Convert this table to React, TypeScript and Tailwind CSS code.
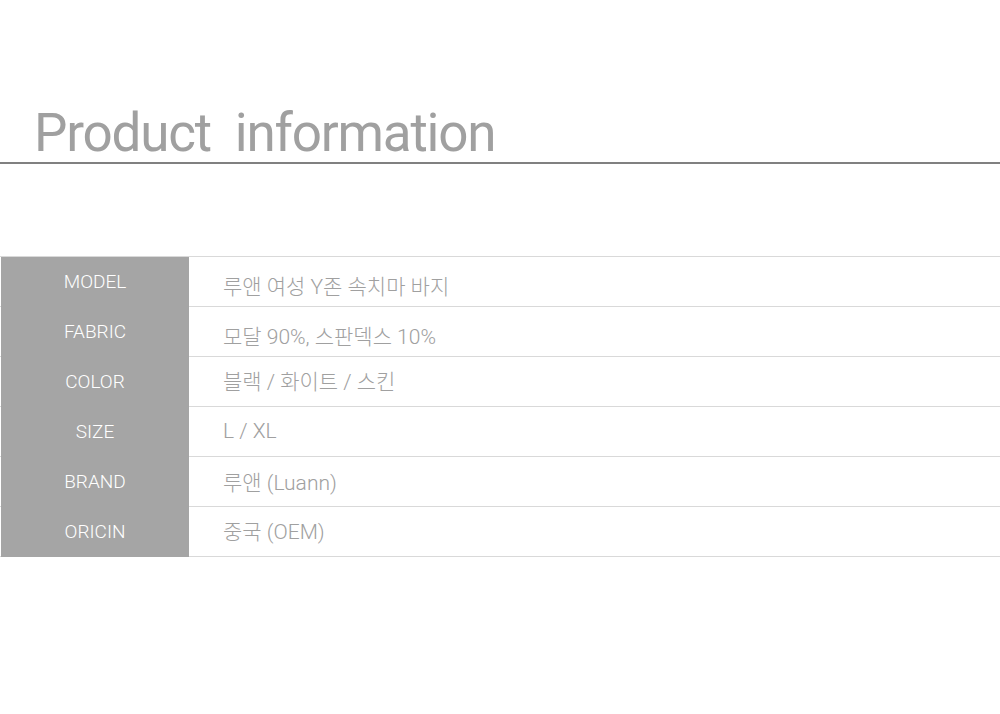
const rows = [
  { label: "MODEL", value: "루앤 여성 Y존 속치마 바지", shift: "pt-[12px]" },
  { label: "FABRIC", value: "모달 90%, 스판덱스 10%", shift: "pt-[12px]" },
  { label: "COLOR", value: "블랙 / 화이트 / 스킨", shift: "pt-[2px]" },
  { label: "SIZE", value: "L / XL", shift: "" },
  { label: "BRAND", value: "루앤 (Luann)", shift: "pt-[5px]" },
  { label: "ORICIN", value: "중국 (OEM)", shift: "pt-[3px]" },
];

export default function App() {
  return (
    <div className="w-[1000px] h-[714px] bg-white font-['Roboto','Noto_Sans_CJK_KR',sans-serif]">
      <div className="pt-[107px] pl-[34px] h-[162px]">
        <h1 className="text-[53px] leading-none text-[#a0a0a0] whitespace-pre tracking-[-1.2px]">
          Product  information
        </h1>
      </div>
      <div className="h-[2px] bg-[#808080]" />

      <div className="mt-[92px] border-t border-[#d9d9d9]">
        {rows.map((r) => (
          <div key={r.label} className="flex h-[50px] border-b border-[#d9d9d9]">
            <div className="w-[188px] bg-[#a5a5a5] flex items-center justify-center text-white text-[19px] font-light ml-[1px] -mb-[1px]">
              {r.label}
            </div>
            <div className={`flex-1 flex items-center pl-[34px] text-[21px] font-light text-[#a0a0a0] ${r.shift}`}>
              {r.value}
            </div>
          </div>
        ))}
      </div>
    </div>
  );
}
